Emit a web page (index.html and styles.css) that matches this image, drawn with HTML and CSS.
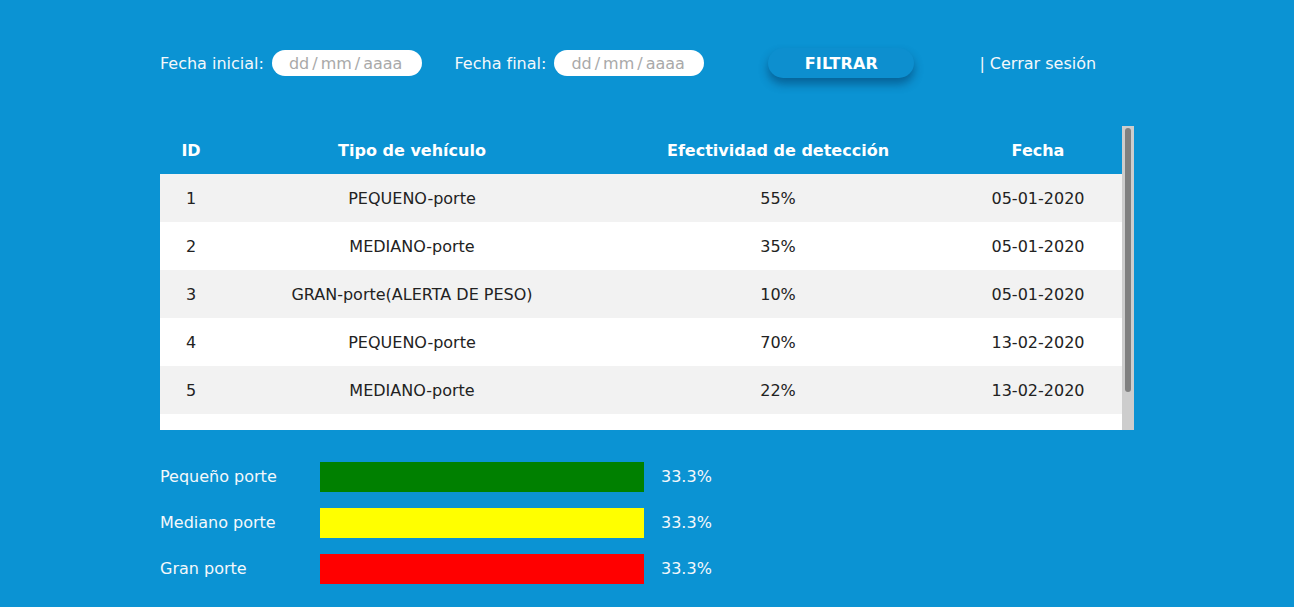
FILE: index.html
```html
<!DOCTYPE html>
<html lang="es">
<head>
<meta charset="utf-8">
<title>Reporte</title>
<link rel="stylesheet" href="styles.css">
</head>
<body>
<div class="page">
  <div class="toolbar">
    <label class="lbl">Fecha inicial:</label>
    <div class="date"><span>dd</span><i>/</i><span>mm</span><i>/</i><span>aaaa</span></div>
    <label class="lbl lbl2">Fecha final:</label>
    <div class="date"><span>dd</span><i>/</i><span>mm</span><i>/</i><span>aaaa</span></div>
    <button class="btn">FILTRAR</button>
    <a class="logout">| Cerrar sesión</a>
  </div>

  <div class="tablewrap">
    <div class="tablebox">
      <table>
        <colgroup><col class="c1"><col class="c2"><col class="c3"><col class="c4"></colgroup>
        <thead>
          <tr><th>ID</th><th>Tipo de vehículo</th><th>Efectividad de detección</th><th>Fecha</th></tr>
        </thead>
        <tbody>
          <tr><td>1</td><td>PEQUENO-porte</td><td>55%</td><td>05-01-2020</td></tr>
          <tr><td>2</td><td>MEDIANO-porte</td><td>35%</td><td>05-01-2020</td></tr>
          <tr><td>3</td><td>GRAN-porte(ALERTA DE PESO)</td><td>10%</td><td>05-01-2020</td></tr>
          <tr><td>4</td><td>PEQUENO-porte</td><td>70%</td><td>13-02-2020</td></tr>
          <tr><td>5</td><td>MEDIANO-porte</td><td>22%</td><td>13-02-2020</td></tr>
          <tr class="blank"><td></td><td></td><td></td><td></td></tr>
        </tbody>
      </table>
    </div>
    <div class="scrollbar"><div class="thumb"></div></div>
  </div>

  <div class="stats">
    <div class="stat"><span class="slabel">Pequeño porte</span><span class="bar green"></span><span class="pct">33.3%</span></div>
    <div class="stat"><span class="slabel">Mediano porte</span><span class="bar yellow"></span><span class="pct">33.3%</span></div>
    <div class="stat"><span class="slabel">Gran porte</span><span class="bar red"></span><span class="pct">33.3%</span></div>
  </div>
</div>
</body>
</html>
```
FILE: styles.css
```css
html, body {
  margin: 0;
  padding: 0;
  background: #0b93d3;
  font-family: "DejaVu Sans", "Liberation Sans", sans-serif;
  font-size: 16px;
  color: #fff;
}
.page {
  padding: 48px 0 0 160px;
  width: 974px;
}
.toolbar {
  display: flex;
  align-items: center;
  height: 30px;
}
.lbl {
  margin-right: 8px;
  color: #f4f8fb;
}
.lbl2 {
  margin-left: 32.6px;
}
.date {
  width: 150px;
  height: 26px;
  box-sizing: border-box;
  background: #fff;
  border-radius: 13px;
  display: flex;
  align-items: center;
  padding-left: 17px;
  color: #a9a9a9;
  font-size: 16px;
}
.date i {
  font-style: normal;
  margin: 0 3px;
}
.btn {
  margin-left: 64px;
  width: 146px;
  height: 30px;
  border: none;
  border-radius: 15px;
  background: #0d8fcf;
  color: #fff;
  font-family: "DejaVu Sans", sans-serif;
  font-weight: bold;
  font-size: 16px;
  letter-spacing: 0.1px;
  box-shadow: 0 6px 10px rgba(0, 40, 80, 0.45);
  padding: 0;
}
.logout {
  margin-left: 65px;
  color: #f4f8fb;
}
.tablewrap {
  margin-top: 48px;
  display: flex;
  width: 974px;
  height: 304px;
}
.tablebox {
  width: 962px;
  height: 304px;
  overflow: hidden;
}
.scrollbar {
  width: 12px;
  height: 304px;
  background: #cdcdcd;
  box-sizing: border-box;
  padding: 2px 3px;
}
.thumb {
  width: 6px;
  height: 264px;
  background: #808080;
  border-radius: 3px;
}
table {
  width: 962px;
  border-collapse: collapse;
  table-layout: fixed;
}
.c1 { width: 62px; }
.c2 { width: 380px; }
.c3 { width: 352px; }
.c4 { width: 168px; }
th {
  height: 48px;
  padding: 0;
  font-weight: bold;
  color: #fff;
  background: #0b93d3;
  text-align: center;
  vertical-align: middle;
}
td {
  height: 48px;
  padding: 0;
  text-align: center;
  color: #222;
}
tbody tr:nth-child(odd) td { background: #f2f2f2; }
tbody tr:nth-child(even) td { background: #fff; }
.stats {
  margin-top: 32px;
  display: flex;
  flex-direction: column;
  gap: 16px;
}
.stat {
  display: flex;
  align-items: center;
  height: 30px;
}
.slabel {
  width: 160px;
  color: #f4f8fb;
  margin-bottom: 2px;
}
.bar {
  width: 324px;
  height: 30px;
}
.green { background: #008000; }
.yellow { background: #ffff00; }
.red { background: #ff0000; }
.pct {
  margin-left: 17px;
  color: #f4f8fb;
  margin-bottom: 2px;
}
```
